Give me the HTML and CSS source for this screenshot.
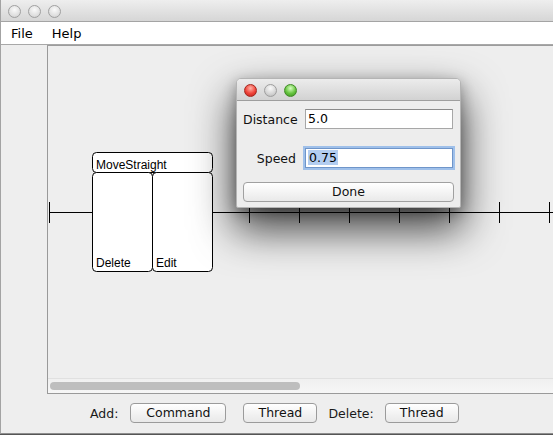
FILE: index.html
```html
<!DOCTYPE html>
<html>
<head>
<meta charset="utf-8">
<link rel="stylesheet" href="styles.css">
</head>
<body>
<div class="window">
  <div class="titlebar">
    <span class="light"></span><span class="light"></span><span class="light"></span>
  </div>
  <div class="menubar">
    <span class="menu">File</span>
    <span class="menu">Help</span>
  </div>
  <div class="main">
    <div class="side"></div>
    <div class="scrollpane">
      <div class="viewport">
        <svg class="canvas" width="505" height="332" viewBox="0 0 505 332">
          <g stroke="#000" stroke-width="1" fill="none">
            <line x1="1" y1="166.5" x2="505" y2="166.5"/>
            <line x1="1.5" y1="156" x2="1.5" y2="177"/>
            <line x1="51.5" y1="156" x2="51.5" y2="177"/>
            <line x1="101.5" y1="156" x2="101.5" y2="177"/>
            <line x1="151.5" y1="156" x2="151.5" y2="177"/>
            <line x1="201.5" y1="156" x2="201.5" y2="177"/>
            <line x1="251.5" y1="156" x2="251.5" y2="177"/>
            <line x1="301.5" y1="156" x2="301.5" y2="177"/>
            <line x1="351.5" y1="156" x2="351.5" y2="177"/>
            <line x1="401.5" y1="156" x2="401.5" y2="177"/>
            <line x1="451.5" y1="156" x2="451.5" y2="177"/>
            <line x1="501.5" y1="156" x2="501.5" y2="177"/>
          </g>
          <g stroke="#000" stroke-width="1" fill="#fff">
            <rect x="44.5" y="106.5" width="120" height="20" rx="4"/>
            <rect x="44.5" y="126.5" width="60" height="99" rx="4"/>
            <rect x="104.5" y="126.5" width="60" height="99" rx="4"/>
          </g>
          <g class="blocktext">
            <text x="48" y="123">MoveStraight</text>
            <text x="48" y="221">Delete</text>
            <text x="108" y="221">Edit</text>
          </g>
        </svg>
      </div>
      <div class="hscroll"><div class="thumb"></div></div>
    </div>
  </div>
  <div class="bottombar">
    <span class="label">Add:</span>
    <span class="btn btn-command">Command</span>
    <span class="btn btn-thread1">Thread</span>
    <span class="label label-delete">Delete:</span>
    <span class="btn btn-thread2">Thread</span>
  </div>
</div>
<div class="desktop"></div>

<div class="dialog">
  <div class="dtitle">
    <span class="dlight red"></span><span class="dlight gray"></span><span class="dlight green"></span>
  </div>
  <div class="dbody">
    <div class="form">
      <span class="flabel">Distance</span>
      <span class="field">5.0</span>
      <span class="flabel">Speed</span>
      <span class="field focused"><span class="sel">0.75</span></span>
    </div>
    <div class="done">Done</div>
  </div>
</div>
</body>
</html>
```

FILE: styles.css
```css
* { box-sizing: border-box; }
html, body {
  margin: 0;
  padding: 0;
}
body {
  width: 553px;
  height: 435px;
  overflow: hidden;
  background: #3a3a3a;
  font-family: "DejaVu Sans", sans-serif;
  font-size: 12px;
  color: #000;
  position: relative;
}
.window {
  width: 553px;
  height: 434px;
  display: flex;
  flex-direction: column;
  background: #eeeeee;
  border-left: 1px solid #a3a3a3;
  border-bottom: 1px solid #8e8e8e;
}
.titlebar {
  height: 22px;
  flex: none;
  background: linear-gradient(#eeeeee, #d6d6d6);
  border-bottom: 1px solid #a4a4a4;
  display: flex;
  align-items: center;
  padding-left: 7px;
  gap: 7px;
}
.light {
  width: 13px;
  height: 13px;
  border-radius: 50%;
  border: 1px solid #a0a0a0;
  background: radial-gradient(circle at 50% 35%, #fafafa, #dcdcdc 70%, #c8c8c8);
  margin-top: 1px;
}
.menubar {
  height: 23px;
  flex: none;
  background: #ffffff;
  border-bottom: 1px solid #a8a8a8;
  display: flex;
  align-items: center;
  padding-left: 10px;
  gap: 19px;
  font-size: 13px;
}
.main {
  height: 349px;
  flex: none;
  display: flex;
}
.side {
  width: 46px;
  flex: none;
  background: #eeeeee;
}
.scrollpane {
  flex: 1;
  display: flex;
  flex-direction: column;
  border-top: 1px solid #9c9c9c;
  border-left: 1px solid #999999;
  border-bottom: 1px solid #9a9a9a;
  background: #eeeeee;
}
.viewport {
  height: 332px;
  flex: none;
  overflow: hidden;
}
.canvas { display: block; }
.blocktext {
  font-family: "Liberation Sans", sans-serif;
  font-size: 12px;
  fill: #000;
}
.hscroll {
  height: 15px;
  flex: none;
  background: linear-gradient(#f0f0f0, #f7f7f7);
  border-top: 1px solid #e0e0e0;
  padding-top: 3px;
  padding-left: 2px;
}
.thumb {
  width: 250px;
  height: 8px;
  border-radius: 4px;
  background: #bebebe;
}
.bottombar {
  flex: 1;
  display: flex;
  align-items: flex-start;
  padding-top: 9px;
  padding-left: 89px;
  font-size: 12.5px;
}
.label {
  height: 20px;
  line-height: 21px;
  color: #1a1a1a;
}
.btn {
  height: 20px;
  line-height: 18px;
  border: 1px solid #9b9b9b;
  border-radius: 4px;
  background: linear-gradient(#ffffff, #f1f1f1 60%, #e9e9e9);
  text-align: center;
  color: #111;
}
.btn-command { width: 96px; margin-left: 12px; }
.btn-thread1 { width: 74px; margin-left: 17px; }
.label-delete { margin-left: 11px; }
.btn-thread2 { width: 74px; margin-left: 11px; }
.desktop {
  height: 1px;
  background: #555;
}

/* dialog */
.dialog {
  position: absolute;
  left: 236px;
  top: 78px;
  width: 225px;
  height: 130px;
  background: #ededed;
  border: 1px solid #b4b4b4;
  border-radius: 5px 5px 2px 2px;
  box-shadow: 0 20px 42px 2px rgba(0, 0, 0, 0.72), 0 4px 14px rgba(0, 0, 0, 0.3);
  overflow: hidden;
}
.dtitle {
  height: 22px;
  background: linear-gradient(#ececec, #d2d2d2);
  border-bottom: 1px solid #9e9e9e;
  display: flex;
  align-items: center;
  padding-left: 7px;
  gap: 7px;
}
.dlight {
  width: 13px;
  height: 13px;
  border-radius: 50%;
  margin-top: 1px;
}
.red {
  border: 1px solid #a3251d;
  background: radial-gradient(circle at 50% 30%, #ffb3a8, #f0443a 55%, #b8201a);
}
.gray {
  border: 1px solid #9e9e9e;
  background: radial-gradient(circle at 50% 30%, #fafafa, #d4d4d4 60%, #b4b4b4);
}
.green {
  border: 1px solid #3f8a25;
  background: radial-gradient(circle at 50% 30%, #d6ffc0, #66c43f 55%, #3b8e1f);
}
.dbody {
  padding: 8px 0 0 6px;
}
.form {
  display: grid;
  grid-template-columns: 53px 148px;
  column-gap: 9px;
  row-gap: 19px;
  align-items: center;
}
.flabel {
  text-align: right;
  font-size: 12.5px;
  color: #111;
}
.field {
  height: 20px;
  line-height: 18px;
  background: #fff;
  border: 1px solid #a7a7a7;
  border-top-color: #8a8a8a;
  padding-left: 2px;
  font-size: 12.5px;
}
.focused {
  border-color: #6f95c9;
  box-shadow: 0 0 0 2px #9fc0ea;
}
.sel {
  background: #b3cdf0;
  padding: 0 1px;
}
.done {
  margin-top: 14px;
  width: 211px;
  height: 20px;
  line-height: 18px;
  text-align: center;
  border: 1px solid #a0a0a0;
  border-radius: 4px;
  background: linear-gradient(#ffffff, #f2f2f2 60%, #e9e9e9);
  font-size: 12.5px;
  color: #111;
}
```
